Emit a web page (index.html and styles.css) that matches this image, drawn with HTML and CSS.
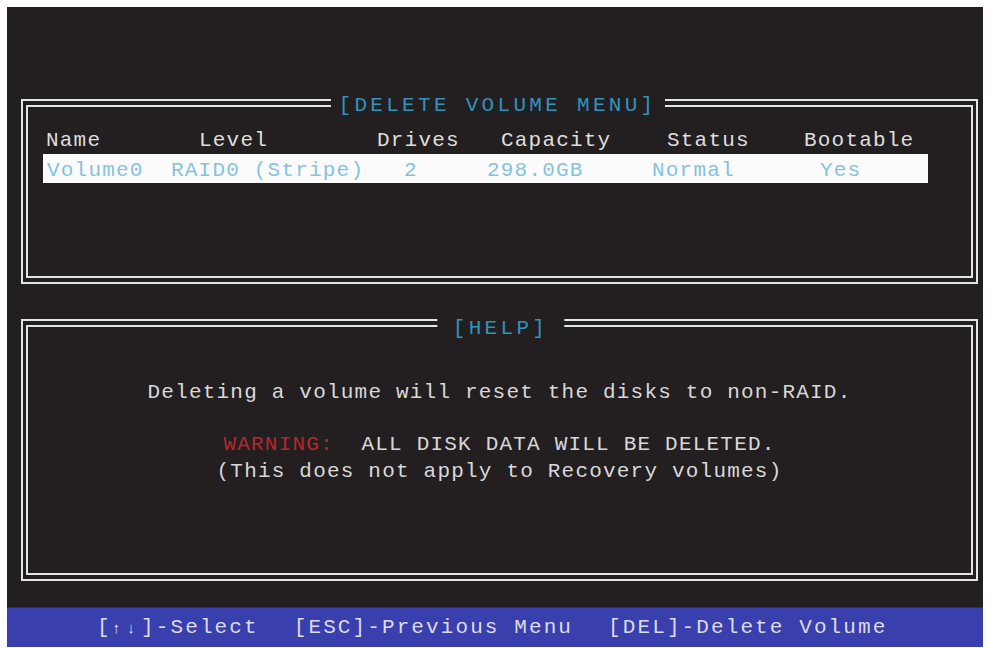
FILE: index.html
```html
<!DOCTYPE html>
<html lang="en">
<head>
<meta charset="utf-8">
<title>Delete Volume Menu</title>
<link rel="stylesheet" href="styles.css">
</head>
<body>
<div class="screen">
  <div class="main">
    <section class="box box-volumes">
      <h1 class="box-title title-top">[DELETE VOLUME MENU]</h1>
      <div class="box-inner">
        <div class="vol-row vol-head">
          <span>Name</span><span>Level</span><span>Drives</span><span>Capacity</span><span>Status</span><span>Bootable</span>
        </div>
        <div class="vol-row vol-sel">
          <span>Volume0</span><span>RAID0 (Stripe)</span><span>2</span><span>298.0GB</span><span>Normal</span><span>Yes</span>
        </div>
      </div>
    </section>
    <section class="box box-help">
      <h2 class="box-title title-help">[HELP]</h2>
      <div class="box-inner help-inner">
        <p class="help-line first">Deleting a volume will reset the disks to non-RAID.</p>
        <p class="help-line second"><span class="warn">WARNING:</span>  ALL DISK DATA WILL BE DELETED.</p>
        <p class="help-line">(This does not apply to Recovery volumes)</p>
      </div>
    </section>
  </div>
  <footer class="keybar">
    <span class="key">[<span class="arrows">↑↓</span>]-Select</span>
    <span class="key">[ESC]-Previous Menu</span>
    <span class="key">[DEL]-Delete Volume</span>
  </footer>
</div>
</body>
</html>
```
FILE: styles.css
```css
* { box-sizing: border-box; }

body {
  margin: 0;
  background: #ffffff;
  font-family: "Liberation Mono", "DejaVu Sans Mono", monospace;
  font-size: 21px;
  letter-spacing: 1.2px;
}

.screen {
  margin: 7px 0 0 7px;
  width: 976px;
  height: 640px;
  background: #231f20;
  display: flex;
  flex-direction: column;
}

.main {
  flex: 1;
  padding: 92px 5px 26px 14px;
  display: flex;
  flex-direction: column;
  gap: 35px;
}

.box {
  position: relative;
  border: 2px solid #e4e4e4;
  padding: 4px 3px;
}

.box-volumes { height: 185px; }
.box-help { height: 262px; }

.box-inner {
  height: 100%;
  border: 2px solid #e4e4e4;
}

.box-title {
  position: absolute;
  left: 50%;
  transform: translateX(-50%);
  margin: 0;
  height: 20px;
  line-height: 20px;
  font-size: 21px;
  font-weight: normal;
  letter-spacing: 3.3px;
  color: #2f93bd;
  background: #231f20;
  white-space: pre;
}

.title-top { top: -5px; padding: 0 8px; margin-left: -2px; }
.title-help { top: -2px; padding: 0 16px; margin-left: 1px; }

.vol-row {
  display: grid;
  margin: 0 43px 0 15px;
  white-space: pre;
}

.vol-head {
  margin-top: 20px;
  line-height: 28px;
  padding-left: 3px;
  color: #dedede;
  grid-template-columns: 153px 178px 124px 166px 137px auto;
}

.vol-sel {
  margin-top: -1px;
  height: 29px;
  padding-top: 4px;
  line-height: 25px;
  padding-left: 4px;
  background: #fbfbfb;
  color: #84c3df;
  grid-template-columns: 124px 233px 83px 165px 168px auto;
}

.help-inner {
  padding-top: 52px;
  text-align: center;
  color: #d8d8d8;
}

.help-line {
  margin: 0;
  line-height: 27px;
  white-space: pre;
}

.help-line.second { margin-top: 25px; }

.warn { color: #b8262c; }

.keybar {
  height: 40px;
  line-height: 40px;
  background: #3a3fae;
  border-top: 1px solid #2a2d7a;
  color: #dcdce8;
  padding-left: 90px;
  display: flex;
  gap: 35px;
  letter-spacing: 2.1px;
  white-space: pre;
}

.arrows {
  font-size: 15px;
  letter-spacing: 5.7px;
}
```
